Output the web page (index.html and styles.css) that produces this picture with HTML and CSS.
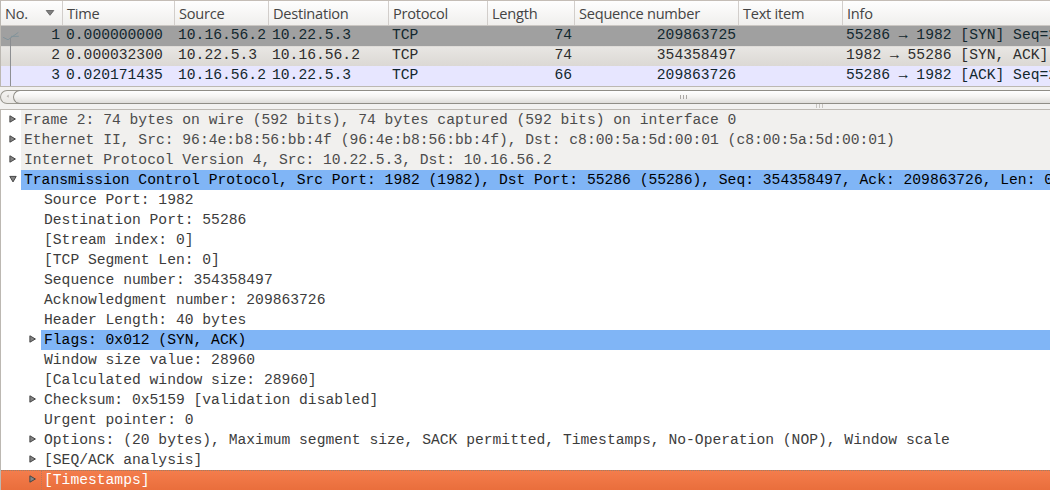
FILE: index.html
```
<!DOCTYPE html>
<html lang="en">
<head>
<meta charset="utf-8">
<title>Packet capture</title>
<link rel="stylesheet" href="styles.css">
</head>
<body>
<svg class="defs" width="0" height="0" aria-hidden="true">
  <symbol id="closed" viewBox="0 0 8 8"><path d="M.9.8v6.4L6.4 4z" fill="#858585" stroke="#454545"/></symbol>
  <symbol id="open" viewBox="0 0 8 8"><path d="M.8 1.4h6.4L4 6.9z" fill="#858585" stroke="#454545"/></symbol>
</svg>
<main class="app">
  <section class="packets">
    <div class="grid head">
      <div class="sorted"><span>No.</span><svg width="10" height="6" viewBox="0 0 10 6"><path d="M1.2.5h7.6L5 5.3z" fill="#808080" stroke="#5a5a5a" stroke-width=".8"/></svg></div>
      <div>Time</div><div>Source</div><div>Destination</div><div>Protocol</div><div>Length</div><div>Sequence number</div><div>Text item</div><div>Info</div>
    </div>
    <div class="rows">
      <div class="grid row related"><div class="num">1</div><div>0.000000000</div><div>10.16.56.2</div><div>10.22.5.3</div><div>TCP</div><div class="num">74</div><div class="num">209863725</div><div></div><div>55286 → 1982 [SYN] Seq=2</div></div>
      <div class="grid row current"><div class="num">2</div><div>0.000032300</div><div>10.22.5.3</div><div>10.16.56.2</div><div>TCP</div><div class="num">74</div><div class="num">354358497</div><div></div><div>1982 → 55286 [SYN, ACK]</div></div>
      <div class="grid row tcp"><div class="num">3</div><div>0.020171435</div><div>10.16.56.2</div><div>10.22.5.3</div><div>TCP</div><div class="num">66</div><div class="num">209863726</div><div></div><div>55286 → 1982 [ACK] Seq=2</div></div>
      <svg class="thread" width="20" height="61" viewBox="0 0 20 61"><path d="M10.5 12v49" stroke="#8b8d90" fill="none"/><path d="M3 11.5l5 2.5L18.5 6.5M11 10.5h8" stroke="#82939a" fill="none"/></svg>
    </div>
  </section>
  <div class="scroll">
    <svg class="step" width="13" height="14" viewBox="0 0 13 14"><path d="M8.5 4v4L6 6z" fill="#b5b2ae"/></svg>
    <div class="thumb"><i class="grip"></i></div>
  </div>
  <div class="split"><i class="grip"></i></div>
  <section class="tree">
    <div class="node"><svg class="arrow"><use href="#closed"/></svg><span class="proto">Frame 2: 74 bytes on wire (592 bits), 74 bytes captured (592 bits) on interface 0</span></div>
    <div class="node"><svg class="arrow"><use href="#closed"/></svg><span class="proto">Ethernet II, Src: 96:4e:b8:56:bb:4f (96:4e:b8:56:bb:4f), Dst: c8:00:5a:5d:00:01 (c8:00:5a:5d:00:01)</span></div>
    <div class="node"><svg class="arrow"><use href="#closed"/></svg><span class="proto">Internet Protocol Version 4, Src: 10.22.5.3, Dst: 10.16.56.2</span></div>
    <div class="node"><svg class="arrow"><use href="#open"/></svg><span class="match">Transmission Control Protocol, Src Port: 1982 (1982), Dst Port: 55286 (55286), Seq: 354358497, Ack: 209863726, Len: 0</span></div>
    <div class="node child"><span>Source Port: 1982</span></div>
    <div class="node child"><span>Destination Port: 55286</span></div>
    <div class="node child"><span>[Stream index: 0]</span></div>
    <div class="node child"><span>[TCP Segment Len: 0]</span></div>
    <div class="node child"><span>Sequence number: 354358497</span></div>
    <div class="node child"><span>Acknowledgment number: 209863726</span></div>
    <div class="node child"><span>Header Length: 40 bytes</span></div>
    <div class="node child"><svg class="arrow"><use href="#closed"/></svg><span class="match">Flags: 0x012 (SYN, ACK)</span></div>
    <div class="node child"><span>Window size value: 28960</span></div>
    <div class="node child"><span>[Calculated window size: 28960]</span></div>
    <div class="node child"><svg class="arrow"><use href="#closed"/></svg><span>Checksum: 0x5159 [validation disabled]</span></div>
    <div class="node child"><span>Urgent pointer: 0</span></div>
    <div class="node child"><svg class="arrow"><use href="#closed"/></svg><span>Options: (20 bytes), Maximum segment size, SACK permitted, Timestamps, No-Operation (NOP), Window scale</span></div>
    <div class="node child"><svg class="arrow"><use href="#closed"/></svg><span>[SEQ/ACK analysis]</span></div>
    <div class="node child selected"><svg class="arrow"><use href="#closed"/></svg><span>[Timestamps]</span></div>
  </section>
</main>
</body>
</html>
```
FILE: styles.css
```
* { box-sizing: border-box; }
body { margin: 0; background: #f2f1f0; }
.defs { display: none; }
.app {
  width: 1050px; height: 490px; overflow: hidden;
  display: flex; flex-direction: column;
  font: 14.667px/20px "Liberation Mono", monospace; color: #3c3c3c;
}
.packets { height: 87px; border: 1px solid #bcb8b2; border-top-color: #c4bdb6; border-right: 0; background: #fff; }
.grid { display: grid; grid-template-columns: 62px 112px 94px 120px 99px 87px 164px 104px 1fr; }
.head {
  height: 25px; border-bottom: 1px solid #cbc7c3;
  background: linear-gradient(#fefefe, #f0efed);
  font: 14.6px/25px "Open Sans", "Noto Sans", sans-serif; letter-spacing: -.25px; color: #444;
}
.head > div { padding-left: 4px; border-right: 1px solid #d2cecb; white-space: nowrap; overflow: hidden; }
.head > div:last-child { border-right: 0; }
.head .sorted { display: flex; align-items: center; justify-content: space-between; padding-right: 7px; }
.rows { position: relative; }
.row { height: 20px; line-height: 18px; color: #12272e; }
.row > div { overflow: hidden; white-space: pre; padding: 0 3px; }
.row > div:not(.num) { padding-right: 0; }
.row > .num { text-align: right; }
.related { background: #a0a0a0; }
.current { background: linear-gradient(#d5d2ce 0, #e8e6e3 1px, #dbd8d4); color: #2d2d2d; }
.tcp { background: #e7e6ff; }
.thread { position: absolute; left: -1px; top: 0; height: 60px; }
.scroll {
  height: 14px; margin-top: 3px; display: flex;
  border: 1px solid #9c9a92; border-right: 0; border-radius: 8px 0 0 8px;
  background: linear-gradient(#f4f3f1, #e9e7e4);
}
.step { width: 12px; height: 12px; flex: none; }
.thumb {
  flex: 1; height: 14px; margin-top: -1px; padding-left: 666px;
  border: 1px solid #8f8d86; border-right: 0; border-radius: 8px 0 0 8px;
  background: linear-gradient(#fff, #f4f3f1 50%, #dfddda);
  display: flex; align-items: center;
}
.grip { display: block; width: 7px; height: 4px; background: repeating-linear-gradient(90deg, #aaa7a3 0 1px, transparent 1px 3px); }
.split { height: 5px; padding-left: 816px; }
.split .grip { background: repeating-linear-gradient(90deg, #c7c4c0 0 1px, transparent 1px 3px); }
.tree { height: 381px; border: solid #bcb8b2; border-width: 1px 0 0 1px; background: #fff; }
.node { height: 20px; display: flex; padding-left: 8px; white-space: pre; }
.node span { flex: 1; line-height: 20px; padding: 0 0 0 3px; overflow: hidden; }
.node.child { padding-left: 40px; }
.arrow { flex: none; width: 8px; height: 8px; margin: 5px 4px 0 0; }
.child:has(.arrow) { padding-left: 28px; }
.proto { background: #f1f0ee; color: #4c4c4c; }
.match { background: #80b5f6; color: #000; }
.selected { background: linear-gradient(#f07f50, #f37b4a 2px, #e96e3c); color: #fff; border-top: 1px dotted #9c806b; }
.selected span { border-left: 1px dotted #bd775a; padding-left: 2px; line-height: 19px; }
.selected .arrow { margin-top: 4px; }
```
